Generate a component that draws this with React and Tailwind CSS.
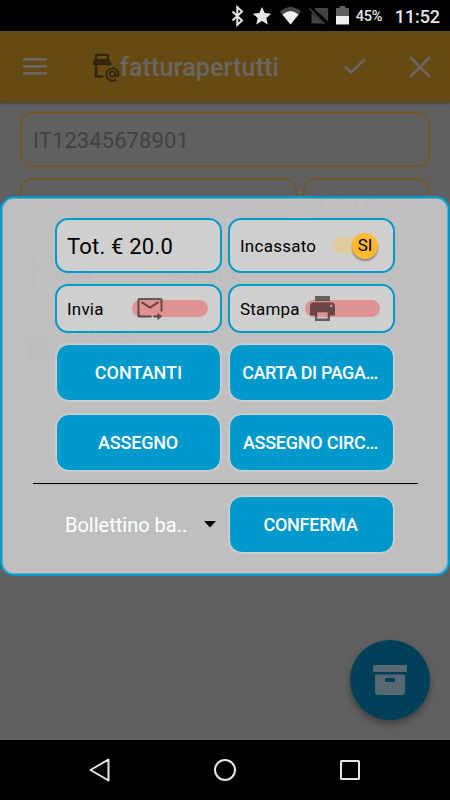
const StatusIcons = () => (
    <svg width="130" height="31" viewBox="225 0 130 31" fill="none">
        <path d="M232.5 11.5 242 20.5 237.3 25V7l4.7 4.5-9.5 9" stroke="#e6e6e6" strokeWidth="2" />
        <path d="m262 7 2.7 6.1 6.6.6-5 4.4 1.5 6.4-5.8-3.4-5.8 3.4 1.5-6.4-5-4.4 6.6-.6z" fill="#e6e6e6" />
        <path d="M280 11.500q10.500-9 21 0L290.500 24.500z" fill="#484848" />
        <path d="M282.400 14.500q8.100-7 16.200 0L290.500 24.500z" fill="#f0f0f0" />
        <path d="M315.500 8H327q1.200 0 1.200 1.200V21.500L314.500 9zM311.500 12.500 323 23.500h-10.500q-1 0-1-1z" fill="#444" />
        <path d="m309.500 8.500 15 15.500" stroke="#444" strokeWidth="1.600" />
        <path d="M336 8h3.500V6h6v2h3.500v8h-13z" fill="#606060" />
        <path d="M336 16h13v8.500h-13z" fill="#f0f0f0" />
    </svg>
)

const LogoIcon = () => (
    <svg width="28" height="30" viewBox="0 0 28 30" fill="none" stroke="#33260f">
        <path d="M4 6.500V2.800Q4 1.800 5 1.800h10q1 0 1 1v3.700" strokeWidth="2.300" />
        <path d="M2.500 6h15L20 12H.3z" fill="#33260f" stroke="none" />
        <path d="M4 11v12.600h7.500M16.200 11v2" strokeWidth="2.500" />
        <path d="M24 26.600A6.200 6.200 0 1 1 26.600 21c0 2.500-3.500 2.600-3.500 0v-2.500" strokeWidth="1.900" />
        <circle cx="20.400" cy="21" r="2.600" strokeWidth="1.900" />
    </svg>
)

const ArchiveIcon = ({ className }) => (
    <svg viewBox="0 0 34 30" className={className} fill="currentColor">
        <rect width="34" height="7" rx="1" />
        <path fillRule="evenodd" d="M2 9.500h30V27q0 3-3 3h-24Q2 30 2 27zm11 3.500q-1 0-1 1v2q0 1 1 1h8q1 0 1-1v-2q0-1-1-1z" />
    </svg>
)

const MailForwardIcon = () => (
    <svg width="26" height="24" viewBox="0 0 26 24" fill="none" stroke="#000" strokeOpacity=".55" strokeWidth="2">
        <path d="M14.500 19.500H2.300q-.8 0-.8-.8V2.800q0-.8.8-.8h21.400q.8 0 .8.800v11.700" />
        <path d="M4.500 5.200 13 10.500l8.500-5.300" />
        <path d="M16.500 19.500H21" />
        <path d="m20.500 15.800 4.500 3.700-4.500 3.700z" fill="#000" fillOpacity=".55" stroke="none" />
    </svg>
)

const PrinterIcon = () => (
    <svg width="25" height="25" viewBox="0 0 25 25" fill="#000" fillOpacity=".52" fillRule="evenodd">
        <path d="M5 0h15v5H5z" />
        <path d="M4 6.200h17q4 0 4 4v9.300h-5V25H5v-5.500H0v-9.300q0-4 4-4zM7.300 16.200v6.300h10.400v-6.300zM21.200 8.500a1.300 1.300 0 1 0 .01 0z" />
    </svg>
)

const Field = ({ className, children }) => (
    <div className={`flex h-[55px] items-center rounded-[13px] border border-[#805300] pt-px pl-3 text-[22px] tracking-[0.08px] text-[#424242] shadow-[inset_0_0_0_0.5px_rgba(128,83,0,0.6)] ${className}`}>
        {children}
    </div>
)

const Box = ({ className, children }) => (
    <div className={`flex w-[167px] items-center rounded-[13px] border-2 border-[#0099cc] bg-white/25 pl-[10px] text-[17px] text-black ${className}`}>
        {children}
    </div>
)

const PayButton = ({ className, children }) => (
    <button className={`h-[57px] w-[165px] rounded-[13px] border border-[#c9d3d6] bg-[#0099cc] text-[18px] font-medium whitespace-nowrap text-white shadow-[0_0_0_1px_rgba(255,255,255,0.15)] ${className}`}>
        {children}
    </button>
)

const PaymentDialog = () => (
    <div className="absolute top-[196px] left-0 flex h-[380px] w-[450px] flex-col items-center rounded-[14px] border-2 border-[#0099cc] bg-[#cacaca]/90 pt-5 shadow-[inset_0_0_0_1px_rgba(0,153,204,0.45)]">
        <div className="grid grid-cols-[167px_167px] gap-x-1.5 gap-y-[11px]">
            <Box className="h-[55px] pt-[2px]">
                <span className="text-[22px] tracking-[0.2px]">Tot. € 20.0</span>
            </Box>
            <Box className="h-[55px]">
                <span className="w-[93px] pt-[2px] tracking-[0.25px]">Incassato</span>
                <span className="flex h-[17px] w-[45px] items-center justify-end rounded-full bg-[#dfcb9d]">
                    <span className="flex size-[26px] shrink-0 items-center justify-center rounded-full bg-[#ffb931] pt-px shadow-[0_2px_2px_rgba(0,0,0,0.35)]">SI</span>
                </span>
            </Box>
            <Box className="h-[49px]">
                <span className="w-[65px] pt-[2px] tracking-[0.2px]">Invia</span>
                <span className="flex h-[17px] w-[76px] items-center rounded-full bg-[#df9292] pl-[5px]">
                    <MailForwardIcon />
                </span>
            </Box>
            <Box className="h-[49px]">
                <span className="w-[65px] pt-[2px] tracking-[0.2px]">Stampa</span>
                <span className="flex h-[17px] w-[75px] items-center rounded-full bg-[#df9292] pl-[5px]">
                    <span className="-mt-px">
                        <PrinterIcon />
                    </span>
                </span>
            </Box>
        </div>
        <div className="mt-[11px] grid grid-cols-[165px_165px] gap-x-2 gap-y-[13px]">
            <PayButton>CONTANTI</PayButton>
            <PayButton className="pr-[3px] tracking-[-0.4px]">CARTA DI PAGA…</PayButton>
            <PayButton className="pr-px tracking-[-0.2px]">ASSEGNO</PayButton>
            <PayButton className="pr-[2px] tracking-[-0.25px]">ASSEGNO CIRC…</PayButton>
        </div>
        <div className="mt-3 h-px w-[385px] bg-black" />
        <div className="mt-3 grid grid-cols-[165px_165px] gap-x-2">
            <div className="flex items-center justify-between pr-[5px] pl-[9px] text-[20px] text-white">
                <span className="pt-px">Bollettino ba..</span>
                <svg width="12" height="7" viewBox="0 0 12 7">
                    <path d="M0 0h12L6 6.500z" />
                </svg>
            </div>
            <PayButton className="pr-[2px] tracking-[-0.25px]">CONFERMA</PayButton>
        </div>
    </div>
)

export default function App() {
    return (
        <div className="relative flex h-[800px] w-[450px] flex-col overflow-hidden bg-[#606060] font-['Roboto',sans-serif]">
            <div className="flex h-[31px] shrink-0 items-center justify-end bg-black pr-[10px] text-[#e6e6e6]">
                <StatusIcons />
                <span className="w-[40px] pt-[2px] pl-px text-[14.500px] font-medium tracking-[-0.3px]">45%</span>
                <span className="pt-[2px] text-[18px] font-medium tracking-[-0.1px]">11:52</span>
            </div>

            <header className="flex h-[71px] shrink-0 items-center bg-[#664a14] pr-[19px] pl-[23px] text-[#696663] shadow-[0_1px_3px_rgba(0,0,0,0.4)]">
                <svg width="24" height="17" viewBox="0 0 24 17" fill="currentColor">
                    <path d="M0 0h24v2.700H0zM0 7h24v2.700H0zM0 14h24v2.700H0z" />
                </svg>
                <div className="ml-[45px] flex items-center">
                    <span className="pt-[3px]">
                        <LogoIcon />
                    </span>
                    <h1 className="pt-[3px] text-[25px] font-medium tracking-[0.15px]">fatturapertutti</h1>
                </div>
                <svg className="ml-auto" width="22" height="17" viewBox="0 0 22 17" fill="none" stroke="currentColor" strokeWidth="2.500">
                    <path d="m1 8.500 6 6L21 1" />
                </svg>
                <svg className="ml-[43px]" width="22" height="22" viewBox="0 0 22 22" fill="none" stroke="currentColor" strokeWidth="2.500">
                    <path d="m1 1 20 20M21 1 1 21" />
                </svg>
            </header>

            <main className="flex flex-1 flex-col gap-[11px] px-5 pt-[10px]">
                <Field>IT12345678901</Field>
                <div className="flex gap-1.5">
                    <Field className="w-[277px]">Azienda s.r.l.</Field>
                    <Field className="w-[127px]">€ 20.0</Field>
                </div>
                <div className="flex gap-1.5">
                    <Field className="w-[127px]">
                        <span className="mr-px h-[30px] w-0.5 bg-[#004d66]" />
                        Targa
                    </Field>
                    <Field className="w-[277px]">Autista</Field>
                </div>
                <div className="flex h-[84px] rounded-sm bg-[#5c5c5c] pt-1 pl-[5px] text-[#3c3c3c]">
                    <ArchiveIcon className="mt-[22px] h-[23px] w-[25px]" />
                    <span className="ml-[25px] text-[22px] font-bold">Diesel</span>
                </div>
            </main>

            <button className="absolute top-[640px] left-[350px] flex size-20 items-center justify-center rounded-full bg-[#004059] text-[#566970] shadow-[0_4px_7px_rgba(0,0,0,0.35)]">
                <ArchiveIcon className="h-[30px] w-[34px]" />
            </button>

            <nav className="flex h-[60px] shrink-0 items-center justify-between bg-black pr-[90px] pl-[88px]">
                <svg width="22" height="24" viewBox="0 0 22 24" fill="none" stroke="#e6e6e6" strokeWidth="2" strokeLinejoin="round">
                    <path d="M20.500 1.500v21L2.500 12z" />
                </svg>
                <svg width="22" height="22" viewBox="0 0 22 22" fill="none" stroke="#e6e6e6" strokeWidth="2">
                    <circle cx="11" cy="11" r="10" />
                </svg>
                <svg width="20" height="20" viewBox="0 0 20 20" fill="none" stroke="#e6e6e6" strokeWidth="2">
                    <rect x="1" y="1" width="18" height="18" rx=".5" />
                </svg>
            </nav>

            <PaymentDialog />
        </div>
    )
}
